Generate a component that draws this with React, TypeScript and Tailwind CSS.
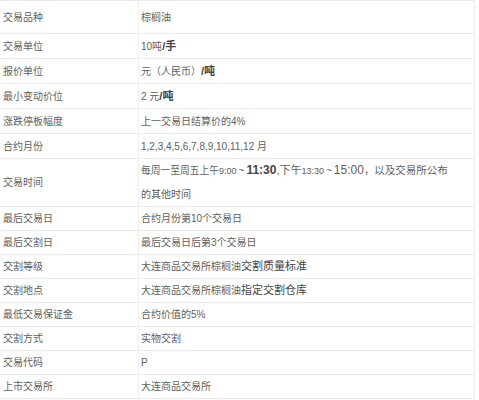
import React from "react";

type Row = { k: string; v: React.ReactNode; h: number };

const B = ({ children }: { children: React.ReactNode }) => (
  <span className="font-bold text-[#444] text-[11px]">{children}</span>
);

const rows: Row[] = [
  { k: "交易品种", v: "棕榈油", h: 32 },
  { k: "交易单位", v: <>10吨<B>/手</B></>, h: 24 },
  { k: "报价单位", v: <>元（人民币）<B>/吨</B></>, h: 24 },
  { k: "最小变动价位", v: <>2 元<B>/吨</B></>, h: 24 },
  { k: "涨跌停板幅度", v: "上一交易日结算价的4%", h: 24 },
  { k: "合约月份", v: "1,2,3,4,5,6,7,8,9,10,11,12 月", h: 24 },
  {
    k: "交易时间",
    v: (
      <div className="leading-[24px]">
        <div className="whitespace-nowrap">
          <span className="text-[9.75px]">每周一至周五上午</span>
          <span className="text-[9px]">9:00</span>
          <span className="text-[10px] mx-[2px]">~</span>
          <span className="text-[12px] font-bold text-[#444]">11:30</span>
          <span className="text-[11px]">,下午</span>
          <span className="text-[9px]">13:30</span>
          <span className="text-[10px] mx-[2px]">~</span>
          <span className="text-[12px]">15:00</span>
          <span className="text-[10.5px]">，以及交易所公布</span>
        </div>
        <div>的其他时间</div>
      </div>
    ),
    h: 47,
  },
  { k: "最后交易日", v: "合约月份第10个交易日", h: 23 },
  { k: "最后交割日", v: "最后交易日后第3个交易日", h: 23 },
  {
    k: "交割等级",
    v: <>大连商品交易所棕榈油<span className="text-[11px] text-[#444]">交割质量标准</span></>,
    h: 23,
  },
  {
    k: "交割地点",
    v: <>大连商品交易所棕榈油<span className="text-[11px] text-[#444]">指定交割仓库</span></>,
    h: 23,
  },
  { k: "最低交易保证金", v: "合约价值的5%", h: 23 },
  { k: "交割方式", v: "实物交割", h: 23 },
  { k: "交易代码", v: "P", h: 23 },
  { k: "上市交易所", v: "大连商品交易所", h: 23 },
];

export default function App() {
  return (
    <div
      className="w-[479px] h-[400px] bg-white overflow-hidden text-[#606060] text-[10px]"
      style={{ fontFamily: '"Liberation Sans", "Noto Sans CJK SC", sans-serif' }}
    >
      <div className="w-[475px] border-t border-r border-[#ececec]">
        {rows.map((r, i) => (
          <div key={i} className="flex border-b border-[#ececec]">
            <div
              className="w-[139px] shrink-0 border-r border-[#efefef] pl-[3px] flex items-center"
              style={{ height: r.h }}
            >
              {r.k}
            </div>
            <div className="flex-1 pl-[2px] flex items-center" style={{ height: r.h }}>
              {r.v}
            </div>
          </div>
        ))}
      </div>
    </div>
  );
}
